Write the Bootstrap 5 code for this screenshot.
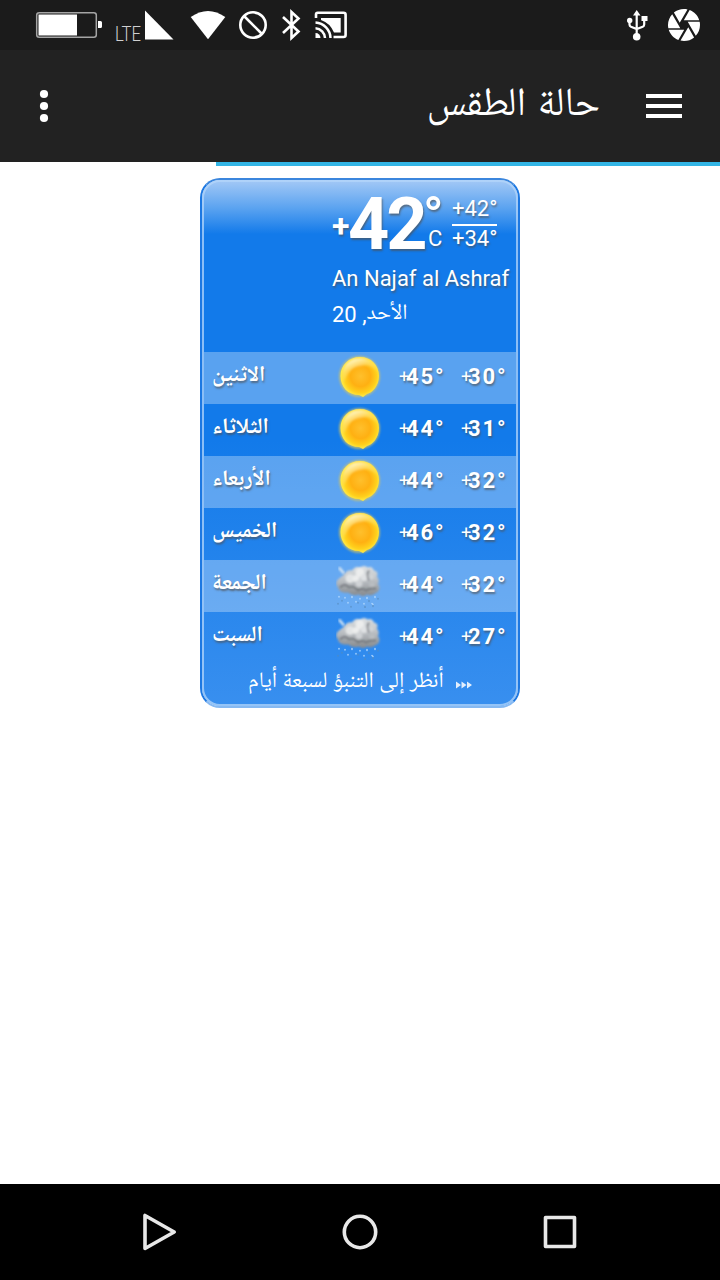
<!DOCTYPE html>
<html lang="ar">
<head>
<meta charset="utf-8">
<meta name="viewport" content="width=device-width, initial-scale=1">
<title>حالة الطقس</title>
<link rel="stylesheet" href="https://cdn.jsdelivr.net/npm/bootstrap@5.3.0/dist/css/bootstrap.min.css">
<style>
body{width:720px;height:1280px;overflow:hidden;background:#fff;color:#fff;font-family:Roboto,"Noto Naskh Arabic","Noto Sans Arabic","DejaVu Sans",sans-serif}
.status{height:50px;background:#1b1b1b}
.appbar{height:112px;background:#222}
.loading{height:4px;margin-left:216px;background:#33b5e5}
.sysnav{height:96px;background:#000}
.ar{display:inline-block;white-space:nowrap}
.title-text{font-size:40px;line-height:50px;width:172px;margin-right:120px;margin-top:-8px;white-space:nowrap;word-spacing:2px}
.burger{margin-left:-74px;margin-right:38px}
.weather{width:320px;height:530px;margin-top:12px;border:2px solid;border-color:#3b86dd #1d78e2 #86b9f2;border-radius:20px;background:linear-gradient(#a4c9f6 0,#5ba3f0 28px,#127aea 54px,#127aea 260px,#388fef 100%) padding-box}
.inner{height:526px;border:2px solid rgba(180,213,250,.75);border-radius:18px;overflow:hidden}
.now{height:170px;padding-left:128px}
.sh{text-shadow:1px 2px 2px rgba(80,80,80,.65)}
.now-temp{height:76px}
.now-plus{font-size:32px;font-weight:700;line-height:40px;width:16px;margin-top:24px}
.now-num{font-size:72px;font-weight:700;line-height:86px;letter-spacing:-3px;width:76px}
.now-unit{width:27px}
.now-deg{font-size:54px;line-height:70px;height:44px;font-weight:500;margin-left:-1px}
.now-c{font-size:22px;line-height:26px;padding-left:4px}
.range{font-size:22px;width:45px;margin-top:13px;line-height:28px;margin-left:1px}
.range div:first-child{border-bottom:2px solid #fff;height:31px}
.range div:last-child{line-height:26px}
.town{font-size:22px;line-height:30px;white-space:nowrap;margin-top:6px}
.date{font-size:22px;line-height:30px;margin-top:6px}
.date .ar{font-size:22px;line-height:23px}
.dayrow{height:52px;padding-left:8px}
.dayrow:nth-child(even){background:rgba(255,255,255,.3)}
.dayrow>*{flex-shrink:0}
.day{width:124px;font-size:22px;font-weight:700;line-height:43px}
.wicon{width:48px;height:48px}
.temp{width:62px;font-size:22px;line-height:50px;font-weight:700;letter-spacing:1.900px;white-space:nowrap}
.temp small{font-size:18px;font-weight:400;letter-spacing:-3.200px;vertical-align:1px;margin-left:-1px}
.more{height:40px;padding-left:44px;font-size:22px;line-height:31px}
.more-label{width:208px}
.arrows{margin-top:17px}
</style>
</head>
<body class="d-flex flex-column">
<svg width="0" height="0" class="position-absolute">
<defs>
<radialGradient id="sg" cx=".52" cy=".48" r=".52"><stop offset="0" stop-color="#ffc02c"/><stop offset=".5" stop-color="#ffb012"/><stop offset=".8" stop-color="#ffd01c"/><stop offset="1" stop-color="#ffec48"/></radialGradient>
<linearGradient id="sh" x1=".1" y1="0" x2=".6" y2=".9"><stop offset="0" stop-color="#fff"/><stop offset=".5" stop-color="#fff2b0" stop-opacity=".4"/><stop offset="1" stop-color="#fff" stop-opacity="0"/></linearGradient>
<linearGradient id="cg" x1="0" y1="0" x2="0" y2="1"><stop offset="0" stop-color="#dfe2e4"/><stop offset=".5" stop-color="#b9bdc1"/><stop offset="1" stop-color="#85898d"/></linearGradient>
<filter id="soft"><feGaussianBlur stdDeviation=".8"/></filter>
<filter id="softer"><feGaussianBlur stdDeviation="1.300"/></filter>
<symbol id="sun" viewBox="0 0 48 48"><circle cx="23.500" cy="24.500" r="20.500" fill="#d2c465" opacity=".75" filter="url(#soft)"/><path d="M24 5C35 5 43 13 43 24C43 34 36 41 31 42L27 45L23 43C12 43 4.500 35 4.500 24S13 5 24 5Z" fill="url(#sg)"/><path d="M24 6C35 6 41 13 41 20C37 14 31 12 25 14C16 15 12 20 8 30C3 17 12 6 24 6Z" fill="url(#sh)" filter="url(#soft)"/></symbol>
<symbol id="rain" viewBox="0 0 48 48"><g transform="translate(-2 2.500)"><path d="M5 5L10 11" stroke="#d8e6f3" stroke-width="2.500" filter="url(#soft)"/><g filter="url(#soft)"><path d="M9 13Q13 7 18 8Q21 3 26 5Q30 2 34 5Q38 3 40 8Q45 9 43 14Q46 18 44 21Q48 28 41 31Q37 34 33 32Q29 35 25 32Q19 34 14 30Q5 31 4 25Q0 20 5 16Z" fill="url(#cg)"/></g><g filter="url(#soft)"><circle cx="26" cy="10" r="4.500" fill="#eceded"/><circle cx="16" cy="16" r="4.500" fill="#e3e5e6"/><circle cx="22" cy="16" r="3.500" fill="#eceded"/><circle cx="30" cy="15" r="3.500" fill="#e0e2e4"/><circle cx="37" cy="14" r="3" fill="#d0d3d6"/><circle cx="25" cy="21" r="3.500" fill="#d0d3d6"/><circle cx="38" cy="22" r="3" fill="#b9bdc1"/><path d="M6 25Q11 20 15 25Q20 23 24 28Q28 25 32 28Q37 25 42 26M35 8Q32 13 35 18" fill="none" stroke="#62676c" stroke-width="1.800" opacity=".7"/></g><g stroke="#b5daff" stroke-width="1.600" stroke-linecap="round" opacity=".85"><path d="M5 34v.5M11 35v.5M18 34v1M26 36v.5M33 35v1M41 34v1M14 40v.5M22 39v.5M30 41v.5M38 41l1 1"/></g><g stroke="#558abc" stroke-width="1.500" stroke-linecap="round" opacity=".7"><path d="M4 41v.5M8 38v.5M17 44v.5M24 40v.5M31 44v1M35 38v1M39 43v1M44 36v.5"/></g></g></symbol>
</defs>
</svg>

<div class="status flex-shrink-0">
<svg width="720" height="50" viewBox="0 0 720 50" class="d-block">
<rect x="36.700" y="12.700" width="59.600" height="24.600" rx="2.500" fill="none" stroke="#a5a5a5" stroke-width="1.500"/><path d="M38.500 14.500h38.500v21h-38.500zM98 21h2.500q1.500 0 1.500 1.500v4q0 1.500-1.500 1.500h-2.500z" fill="#fff"/>
<text x="115" y="41" font-size="19.500" font-weight="300" fill="#d0d0d0" textLength="26" lengthAdjust="spacingAndGlyphs">LTE</text>
<path d="M145 10.500V39.500H173.500Z" fill="#fff"/>
<path d="M190.700 17Q208 5 225.300 17L208 39.300Z" fill="#fff"/>
<g fill="none" stroke="#fff" stroke-width="2.600"><circle cx="253" cy="25" r="12.700"/><path d="M244 16L262 34"/><path d="M283 17L298.500 31.500L291.500 38V12L298.500 18.500L283 33"/></g>
<path d="M316 18V14.500Q316 12.800 317.700 12.800H343.500Q345.600 12.800 345.600 14.800V35Q345.600 37 343.500 37H333.500" fill="none" stroke="#fff" stroke-width="2.600"/>
<path d="M321 18H340.700V32.500H334Q330 23 321 20Z" fill="#fff"/>
<g fill="none" stroke="#fff" stroke-width="2.500"><path d="M315.500 22.500A16 16 0 0 1 330.500 38M315.500 28.300A10 10 0 0 1 325 38"/></g><path d="M315.500 33A5 5 0 0 1 320.500 38H315.500Z" fill="#fff"/>
<g stroke="#fff" fill="none" stroke-width="2.200"><path d="M636.700 36V13M629.500 20V24.500Q629.500 26 631 26.700L636.700 29L642.700 26.700Q644.200 26 644.200 24.500V19"/></g><path d="M636.700 10L640.500 15.500H633ZM641.500 16h6v5h-6z" fill="#fff"/><circle cx="629.700" cy="20.500" r="2.700" fill="#fff"/><circle cx="636.700" cy="36.700" r="3.800" fill="#fff"/>
<path transform="translate(664.800 5.800) scale(1.600)" fill="#fff" d="M9.400 10.500l4.770-8.260C13.470 2.090 12.750 2 12 2c-2.400 0-4.600.85-6.320 2.250l3.660 6.350.06-.1zM21.540 9c-.92-2.920-3.150-5.260-6-6.340L11.880 9h9.660zm.26 1h-7.490l.29.5 4.760 8.250C21 16.970 22 14.610 22 12c0-.69-.07-1.350-.2-2zM8.540 12l-3.900-6.750C3.010 7.030 2 9.390 2 12c0 .69.07 1.350.2 2h7.490l-1.150-2zm-6.080 3c.92 2.920 3.150 5.260 6 6.340L12.120 15H2.460zm11.270 0l-3.900 6.760c.7.150 1.420.24 2.170.24 2.400 0 4.600-.85 6.320-2.250l-3.660-6.350-.93 1.600z"/>
</svg>
</div>

<header class="appbar flex-shrink-0 d-flex align-items-center">
<svg width="88" height="112" viewBox="0 0 88 112" fill="#fff"><circle cx="44" cy="44" r="4.100"/><circle cx="44" cy="56" r="4.100"/><circle cx="44" cy="68" r="4.100"/></svg>
<div class="ms-auto title-text" dir="rtl"><span class="ar">حالة الطقس</span></div>
<svg class="burger" width="36" height="24" viewBox="0 0 36 24" fill="#fff"><path d="M0 0h36v4H0zM0 10h36v4H0zM0 20h36v4H0z"/></svg>
</header>
<div class="loading flex-shrink-0"></div>

<main class="flex-grow-1">
<section class="weather mx-auto"><div class="inner">
<div class="now">
<div class="now-temp d-flex sh">
<div class="now-plus">+</div><div class="now-num">42</div>
<div class="now-unit"><div class="now-deg">°</div><div class="now-c">C</div></div>
<div class="range"><div>+42°</div><div>+34°</div></div>
</div>
<div class="town sh">An Najaf al Ashraf</div>
<div class="date d-flex"><span>20 ,</span><span class="ar">الأحد</span></div>
</div>
<div class="dayrow d-flex"><div class="day sh"><span class="ar">الاثنين</span></div><svg class="wicon"><use href="#sun"/></svg><div class="ms-3 temp sh"><small>+</small>45°</div><div class="temp sh"><small>+</small>30°</div></div>
<div class="dayrow d-flex"><div class="day sh"><span class="ar">الثلاثاء</span></div><svg class="wicon"><use href="#sun"/></svg><div class="ms-3 temp sh"><small>+</small>44°</div><div class="temp sh"><small>+</small>31°</div></div>
<div class="dayrow d-flex"><div class="day sh"><span class="ar">الأربعاء</span></div><svg class="wicon"><use href="#sun"/></svg><div class="ms-3 temp sh"><small>+</small>44°</div><div class="temp sh"><small>+</small>32°</div></div>
<div class="dayrow d-flex"><div class="day sh"><span class="ar">الخميس</span></div><svg class="wicon"><use href="#sun"/></svg><div class="ms-3 temp sh"><small>+</small>46°</div><div class="temp sh"><small>+</small>32°</div></div>
<div class="dayrow d-flex"><div class="day sh"><span class="ar">الجمعة</span></div><svg class="wicon"><use href="#rain"/></svg><div class="ms-3 temp sh"><small>+</small>44°</div><div class="temp sh"><small>+</small>32°</div></div>
<div class="dayrow d-flex"><div class="day sh"><span class="ar">السبت</span></div><svg class="wicon"><use href="#rain"/></svg><div class="ms-3 temp sh"><small>+</small>44°</div><div class="temp sh"><small>+</small>27°</div></div>
<div class="more d-flex"><div class="more-label"><span class="ar">أنظر إلى التنبؤ لسبعة أيام</span></div><svg class="arrows" width="17" height="8" viewBox="0 0 17 8" fill="#e3effd"><path d="M0 .5l5 3.500-5 3.500zM5.500 .5l5 3.500-5 3.500zM11 .5l5 3.500-5 3.500z"/></svg></div>
</div></section>
</main>

<nav class="sysnav flex-shrink-0">
<svg width="720" height="96" viewBox="0 0 720 96" fill="none" stroke="#e8e8e8" stroke-width="3.600" stroke-linejoin="round" class="d-block"><path d="M145 31.500V64.500L174.200 48Z"/><circle cx="360" cy="48" r="15.700"/><rect x="545.500" y="33.500" width="29" height="29"/></svg>
</nav>
<script src="https://cdn.jsdelivr.net/npm/bootstrap@5.3.0/dist/js/bootstrap.bundle.min.js"></script>
</body>
</html>
